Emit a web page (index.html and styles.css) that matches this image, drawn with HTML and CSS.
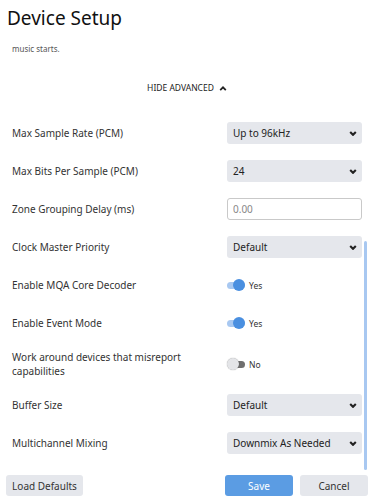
FILE: index.html
```html
<!DOCTYPE html>
<html lang="en">
<head>
  <meta charset="UTF-8" />
  <title>Device Setup</title>
  <link rel="stylesheet" href="styles.css">
</head>
<body>
<div class="dialog">

  <!-- ========== Cabecera ========== -->
  <header class="dlg-head">
    <h1>Device Setup</h1>
  </header>

  <!-- ========== Cuerpo (desplazado al final) ========== -->
  <div class="dlg-wrap">
    <div class="dlg-body">
      <div class="settings">
        <p class="desc">Some devices need extra time to sync so that no audio is lost when a track or<br>music starts.</p>

        <div class="adv-toggle">HIDE ADVANCED
          <svg viewBox="0 0 10 6"><path d="M1.5 5L5 1.5 8.5 5"/></svg>
        </div>

        <div class="row"><span class="lbl">Max Sample Rate (PCM)</span><div class="select"><span>Up to 96kHz</span><svg viewBox="0 0 10 6"><path d="M1.5 1.2l3.5 3.5 3.5-3.5"/></svg></div></div>
        <div class="row"><span class="lbl">Max Bits Per Sample (PCM)</span><div class="select"><span>24</span><svg viewBox="0 0 10 6"><path d="M1.5 1.2l3.5 3.5 3.5-3.5"/></svg></div></div>
        <div class="row"><span class="lbl">Zone Grouping Delay (ms)</span><input class="field" type="text" placeholder="0.00"></div>
        <div class="row"><span class="lbl">Clock Master Priority</span><div class="select"><span>Default</span><svg viewBox="0 0 10 6"><path d="M1.5 1.2l3.5 3.5 3.5-3.5"/></svg></div></div>
        <div class="row"><span class="lbl">Enable MQA Core Decoder</span><div class="toggle on"><span class="switch"><i></i></span>Yes</div></div>
        <div class="row"><span class="lbl">Enable Event Mode</span><div class="toggle on"><span class="switch"><i></i></span>Yes</div></div>
        <div class="row"><span class="lbl">Work around devices that misreport capabilities</span><div class="toggle"><span class="switch"><i></i></span>No</div></div>
        <div class="row"><span class="lbl">Buffer Size</span><div class="select"><span>Default</span><svg viewBox="0 0 10 6"><path d="M1.5 1.2l3.5 3.5 3.5-3.5"/></svg></div></div>
        <div class="row"><span class="lbl">Multichannel Mixing</span><div class="select"><span>Downmix As Needed</span><svg viewBox="0 0 10 6"><path d="M1.5 1.2l3.5 3.5 3.5-3.5"/></svg></div></div>
      </div>
    </div>
    <div class="thumb"></div>
  </div>

  <!-- ========== Pie ========== -->
  <footer class="dlg-foot">
    <button class="btn btn-load">Load Defaults</button>
    <span class="spacer"></span>
    <button class="btn btn-save">Save</button>
    <button class="btn btn-cancel">Cancel</button>
  </footer>
</div>
</body>
</html>
```

FILE: styles.css
```css
:root{
  --texto:#2b2b2b; --gris-claro:#e5e7ec; --azul:#5b9ce3;
  --azul-claro:#a8c8f1; --azul-knob:#4a8fe0;
}
*{box-sizing:border-box}
html,body{margin:0;height:100%;background:#fff}
body{font-family:"Noto Sans", "Open Sans", sans-serif;color:var(--texto)}

.dialog{height:499px;display:flex;flex-direction:column}

/* ---------- Cabecera ---------- */
.dlg-head{height:40px;flex:none;padding:3px 7px 0;background:#fff}
.dlg-head h1{margin:0;font-size:19px;font-weight:400;line-height:30px;color:#111}

/* ---------- Cuerpo ---------- */
.dlg-wrap{flex:1;position:relative;min-height:0}
.dlg-body{height:100%;overflow:hidden;margin-right:10px;display:flex;flex-direction:column;justify-content:flex-end}
.thumb{position:absolute;right:7px;bottom:1px;width:3px;height:229px;border-radius:2px;background:var(--azul-claro)}

.settings{padding:0 2px 9px 12px}
.row{display:grid;grid-template-columns:1fr 135px;align-items:center;column-gap:12px;padding:8px 0;min-height:38px}
.lbl{font-size:10px;line-height:14px;color:#333}

.desc{margin:0;font-size:8px;line-height:14px;color:#555}

.adv-toggle{
  margin:24px 0 18px;display:flex;justify-content:center;align-items:center;gap:5px;
  font-size:8.5px;line-height:16px;color:#222
}
.adv-toggle svg{width:8px;height:5px;fill:none;stroke:#222;stroke-width:2.2}

/* Select */
.select{
  height:22px;display:flex;align-items:center;justify-content:space-between;
  padding:0 5px 0 6px;background:var(--gris-claro);border-radius:3px;font-size:10px;color:#222
}
.select svg{width:8px;height:5px;fill:none;stroke:#222;stroke-width:2.6}

/* Input */
.field{
  width:100%;height:22px;padding:0 5px;border:1px solid #c9c9c9;border-radius:3px;
  font:10px "Noto Sans", sans-serif;color:#222;background:#fff
}
.field::placeholder{color:#888}

/* Toggle */
.toggle{display:flex;align-items:center;gap:4px;font-size:8.5px;color:#333}
.switch{position:relative;width:18px;height:12px;display:block}
.switch::before{
  content:"";position:absolute;left:1px;right:0;top:2.5px;height:7px;border-radius:4px;background:#6f6f6f
}
.switch i{
  position:absolute;left:0;top:0;width:12px;height:12px;border-radius:50%;
  background:#e4e5e8;box-shadow:0 0 1px rgba(0,0,0,.45)
}
.toggle.on .switch::before{background:var(--azul-claro);left:0}
.toggle.on .switch i{left:6px;background:var(--azul-knob);box-shadow:none}

/* ---------- Pie ---------- */
.dlg-foot{height:28px;flex:none;display:flex;align-items:flex-start;gap:7px;padding:4px 6px 0}
.spacer{flex:1}
.btn{
  height:21px;padding:0 6px;border:none;border-radius:3px;background:var(--gris-claro);
  font:10px "Noto Sans", sans-serif;color:#333;cursor:pointer
}
.btn-load{width:77px}
.btn-save{width:68px;background:var(--azul);color:#fff}
.btn-cancel{width:68px}
```
